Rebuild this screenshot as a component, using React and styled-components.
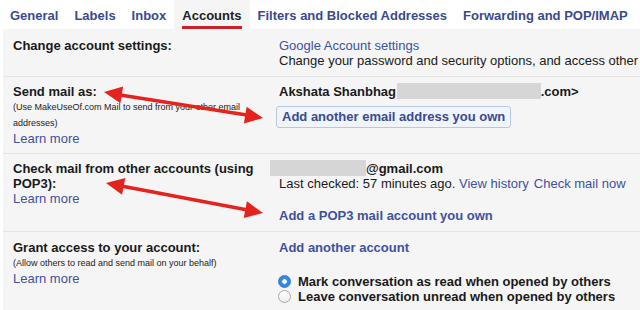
import styled, { createGlobalStyle } from "styled-components";

const Global = createGlobalStyle`
  html, body {
    margin: 0;
    padding: 0;
    background: #ffffff;
  }
  body {
    font-family: Arial, "Liberation Sans", Helvetica, sans-serif;
    font-size: 13px;
    color: #222;
  }
`;

const Page = styled.div`
  position: relative;
  width: 640px;
  height: 310px;
  overflow: hidden;
  background: #fff;
`;

const TabBar = styled.div`
  display: flex;
  height: 29px;
  padding-left: 2px;
  background: #fff;
`;

const Tab = styled.div`
  padding: 5px 8px 0;
  font-weight: bold;
  background: ${(p) => (p.$active ? "#f5f5f5" : "transparent")};
  color: ${(p) => (p.$active ? "#222" : "#3a4a8e")};
  white-space: nowrap;
`;

const TabLabel = styled.span`
  display: inline-block;
  line-height: 21px;
  border-bottom: 3px solid ${(p) => (p.$active ? "#c9232a" : "transparent")};
`;

const Panel = styled.div`
  margin-left: 3px;
  background: #f5f5f5;
  height: 281px;
`;

const Row = styled.div`
  display: grid;
  grid-template-columns: 276px 1fr;
  padding: ${(p) => p.$pad || "7px 0 7px"};
  border-top: ${(p) => (p.$first ? "none" : "1px solid #e3e3e3")};
  line-height: 15px;
`;

const Left = styled.div`
  padding: 0 16px 0 10px;
`;

const Right = styled.div`
  white-space: nowrap;
  min-width: 0;
`;

const Title = styled.div`
  font-weight: bold;
  color: #1a1a1a;
`;

const Note = styled.div`
  font-size: 9px;
  line-height: 16px;
  color: #222;
`;

const Link = styled.a`
  color: #3d52a0;
  text-decoration: none;
  font-weight: ${(p) => (p.$bold ? "bold" : "normal")};
  margin-left: ${(p) => p.$ml || "0"};
  cursor: pointer;
`;

const Line = styled.div`
  margin-top: ${(p) => p.$mt || "0"};
  font-weight: ${(p) => (p.$bold ? "bold" : "normal")};
  color: #1a1a1a;
`;

const Redacted = styled.span`
  display: inline-block;
  vertical-align: top;
  width: ${(p) => p.$w}px;
  height: ${(p) => p.$h}px;
  margin-left: ${(p) => p.$ml || 0}px;
  margin-top: ${(p) => p.$mt || 0}px;
  background: #d6d6d6;
`;

const AddButton = styled.div`
  display: inline-block;
  margin: 7px 0 0 -3px;
  padding: 0 5px;
  line-height: 20px;
  border: 1px solid #b7c8e3;
  border-radius: 3px;
  background: #f0f4fb;
  font-weight: bold;
  color: #3a4a8e;
`;

const RadioGroup = styled.div`
  margin-top: 19px;
`;

const RadioRow = styled.label`
  display: flex;
  align-items: center;
  height: 15px;
  font-weight: bold;
  color: #1a1a1a;
`;

const RadioDot = styled.span`
  box-sizing: border-box;
  width: 13px;
  height: 13px;
  margin: 0 7px 0 -1px;
  border-radius: 50%;
  flex: none;
  border: 1px solid ${(p) => (p.$checked ? "#2f7fd6" : "#a8a8a8")};
  background: ${(p) =>
    p.$checked
      ? "radial-gradient(circle, #fff 0 2px, #3d8fe6 2.5px, #2a78d4 100%)"
      : "linear-gradient(#ffffff, #ececec)"};
`;

const Arrows = styled.svg`
  position: absolute;
  left: 0;
  top: 0;
  pointer-events: none;
`;

const head = (tx, ty, fx, fy) => {
  const dx = tx - fx;
  const dy = ty - fy;
  const len = Math.hypot(dx, dy);
  const ux = dx / len;
  const uy = dy / len;
  const L = 18;
  const W = 8.5;
  const bx = tx - ux * L;
  const by = ty - uy * L;
  return `${tx},${ty} ${bx - uy * W},${by + ux * W} ${bx + uy * W},${by - ux * W}`;
};

const DoubleArrow = ({ x1, y1, x2, y2 }) => (
  <g fill="#e3231e" stroke="#e3231e">
    <line x1={x1 + 10} y1={y1 + 2} x2={x2 - 10} y2={y2 - 2} strokeWidth="3.5" />
    <polygon points={head(x1, y1, x2, y2)} stroke="none" />
    <polygon points={head(x2, y2, x1, y1)} stroke="none" />
  </g>
);

const tabs = ["General", "Labels", "Inbox", "Accounts", "Filters and Blocked Addresses", "Forwarding and POP/IMAP"];

export default function App() {
  return (
    <Page>
      <Global />
      <TabBar>
        {tabs.map((t) => (
          <Tab key={t} $active={t === "Accounts"}>
            <TabLabel $active={t === "Accounts"}>{t}</TabLabel>
          </Tab>
        ))}
      </TabBar>
      <Panel>
        <Row $first $pad="9px 0 8px">
          <Left>
            <Title>Change account settings:</Title>
          </Left>
          <Right>
            <Link>Google Account settings</Link>
            <Line>Change your password and security options, and access other</Line>
          </Right>
        </Row>

        <Row $pad="7px 0 7px">
          <Left>
            <Title>Send mail as:</Title>
            <Note>(Use MakeUseOf.com Mail to send from your other email addresses)</Note>
            <Link>Learn more</Link>
          </Left>
          <Right>
            <Line $bold>
              Akshata Shanbhag <Redacted $w={144} $h={16} $ml={-3} $mt={-1} />.com&gt;
            </Line>
            <AddButton>Add another email address you own</AddButton>
          </Right>
        </Row>

        <Row $pad="7px 0 8px">
          <Left>
            <Title>Check mail from other accounts (using POP3):</Title>
            <Link>Learn more</Link>
          </Left>
          <Right>
            <Line $bold>
              <Redacted $w={96} $h={16} $ml={-9} $mt={-1} />@gmail.com
            </Line>
            <Line>
              Last checked: 57 minutes ago. <Link>View history</Link>
              <Link $ml="5px">Check mail now</Link>
            </Line>
            <Line $mt="17px">
              <Link $bold>Add a POP3 mail account you own</Link>
            </Line>
          </Right>
        </Row>

        <Row $pad="8px 0 8px">
          <Left>
            <Title>Grant access to your account:</Title>
            <Note>(Allow others to read and send mail on your behalf)</Note>
            <Link>Learn more</Link>
          </Left>
          <Right>
            <Link $bold>Add another account</Link>
            <RadioGroup>
              <RadioRow>
                <RadioDot $checked />
                Mark conversation as read when opened by others
              </RadioRow>
              <RadioRow>
                <RadioDot />
                Leave conversation unread when opened by others
              </RadioRow>
            </RadioGroup>
          </Right>
        </Row>
      </Panel>

      <Arrows width="640" height="310" viewBox="0 0 640 310">
        <DoubleArrow x1={104} y1={92} x2={263} y2={118} />
        <DoubleArrow x1={106} y1={183} x2={263} y2={213} />
      </Arrows>
    </Page>
  );
}
